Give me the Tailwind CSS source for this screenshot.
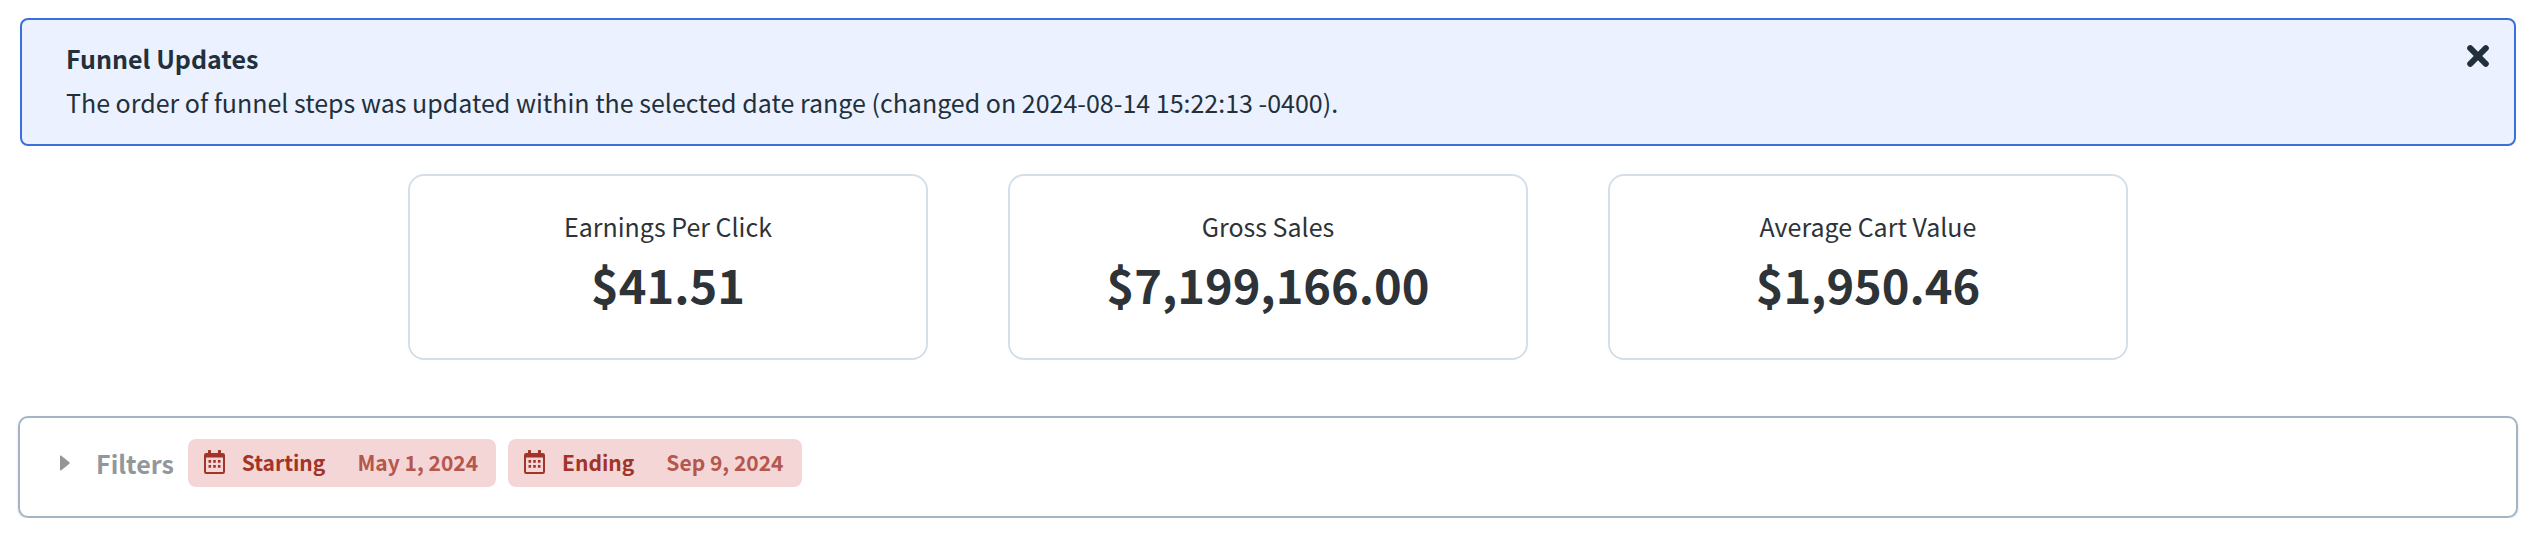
<!DOCTYPE html>
<html lang="en">
<head>
<meta charset="utf-8">
<meta name="viewport" content="width=device-width, initial-scale=1">
<title>Funnel Stats</title>
<script src="https://cdn.jsdelivr.net/npm/@tailwindcss/browser@4"></script>
</head>
<body class="bg-white font-['Noto_Sans_CJK_SC',sans-serif] text-[25px] text-[#2e3338]">
<main class="px-[18px] pt-[18px]">
  <section class="mx-0.5 flex items-start justify-between rounded-lg border-2 border-[#3b70da] bg-[#ebf1fe] pt-4 pr-6 pb-5 pl-11 leading-[44px] text-[#22303c]">
    <div>
      <h2 class="font-bold">Funnel Updates</h2>
      <p>The order of funnel steps was updated within the selected date range (changed on 2024-08-14 15:22:13 -0400).</p>
    </div>
    <button type="button" aria-label="Close" class="mt-2">
      <svg class="h-6 w-6" viewBox="0 0 24 24" fill="none" stroke="currentColor" stroke-width="6" stroke-linecap="round" aria-hidden="true"><path d="M4.2 4.2l15.6 15.6M19.8 4.2L4.2 19.8"/></svg>
    </button>
  </section>

  <section class="mx-auto mt-7 grid max-w-[1720px] grid-cols-3 gap-20 text-center">
    <div class="rounded-2xl border-2 border-[#d5dfe9] pt-7 pb-[38px]">
      <h3 class="leading-[44px]">Earnings Per Click</h3>
      <p class="text-[47px] leading-[72px] font-bold">$41.51</p>
    </div>
    <div class="rounded-2xl border-2 border-[#d5dfe9] pt-7 pb-[38px]">
      <h3 class="leading-[44px]">Gross Sales</h3>
      <p class="text-[47px] leading-[72px] font-bold">$7,199,166.00</p>
    </div>
    <div class="rounded-2xl border-2 border-[#d5dfe9] pt-7 pb-[38px]">
      <h3 class="leading-[44px]">Average Cart Value</h3>
      <p class="text-[47px] leading-[72px] font-bold">$1,950.46</p>
    </div>
  </section>

  <section class="mt-14 flex items-center rounded-[10px] border-2 border-[#a5b4c5] pt-[21px] pb-[29px] pl-10 font-bold shadow-sm">
    <button type="button" aria-expanded="false" class="flex items-center gap-[26px] text-[#92979c]">
      <svg class="h-4 w-2.5" viewBox="0 0 10 16" fill="currentColor" aria-hidden="true"><path d="M0 1.2Q0 0 1 .6L9.4 7.3Q10 8 9.4 8.7L1 15.4Q0 16 0 14.8Z"/></svg>
      <span class="leading-[48px]">Filters</span>
    </button>
    <div class="ml-[14px] flex gap-3 text-[21px] leading-[46px] text-[#a13428]">
      <button type="button" class="flex items-center rounded-lg bg-[#f4d6d6] pr-[18px] pb-0.5 pl-4">
        <svg class="h-6 w-[21px]" viewBox="0 0 21 24" fill="currentColor" aria-hidden="true"><path fill-rule="evenodd" d="M4 .6Q4 0 4.6 0h1.8Q7 0 7 .6V3h7V.6Q14 0 14.6 0h1.8Q17 0 17 .6V3h1.8Q21 3 21 5.2v16.6Q21 24 18.8 24H2.2Q0 24 0 21.8V5.2Q0 3 2.2 3H4zM2 7.5v14q0 .5.5.5h16q.5 0 .5-.5v-14z"/><path d="M4.5 10h2.6v2.8H4.5zM9.2 10h2.6v2.8H9.2zM13.9 10h2.6v2.8h-2.6zM4.5 15h2.6v2.8H4.5zM9.2 15h2.6v2.8H9.2zM13.9 15h2.6v2.8h-2.6z"/></svg>
        <span class="ml-[17px]">Starting</span>
        <span class="ml-8 text-[#b5574d]">May 1, 2024</span>
      </button>
      <button type="button" class="flex items-center rounded-lg bg-[#f4d6d6] pr-[18px] pb-0.5 pl-4">
        <svg class="h-6 w-[21px]" viewBox="0 0 21 24" fill="currentColor" aria-hidden="true"><path fill-rule="evenodd" d="M4 .6Q4 0 4.6 0h1.8Q7 0 7 .6V3h7V.6Q14 0 14.6 0h1.8Q17 0 17 .6V3h1.8Q21 3 21 5.2v16.6Q21 24 18.8 24H2.2Q0 24 0 21.8V5.2Q0 3 2.2 3H4zM2 7.5v14q0 .5.5.5h16q.5 0 .5-.5v-14z"/><path d="M4.5 10h2.6v2.8H4.5zM9.2 10h2.6v2.8H9.2zM13.9 10h2.6v2.8h-2.6zM4.5 15h2.6v2.8H4.5zM9.2 15h2.6v2.8H9.2zM13.9 15h2.6v2.8h-2.6z"/></svg>
        <span class="ml-[17px]">Ending</span>
        <span class="ml-8 text-[#b5574d]">Sep 9, 2024</span>
      </button>
    </div>
  </section>
</main>
</body>
</html>
